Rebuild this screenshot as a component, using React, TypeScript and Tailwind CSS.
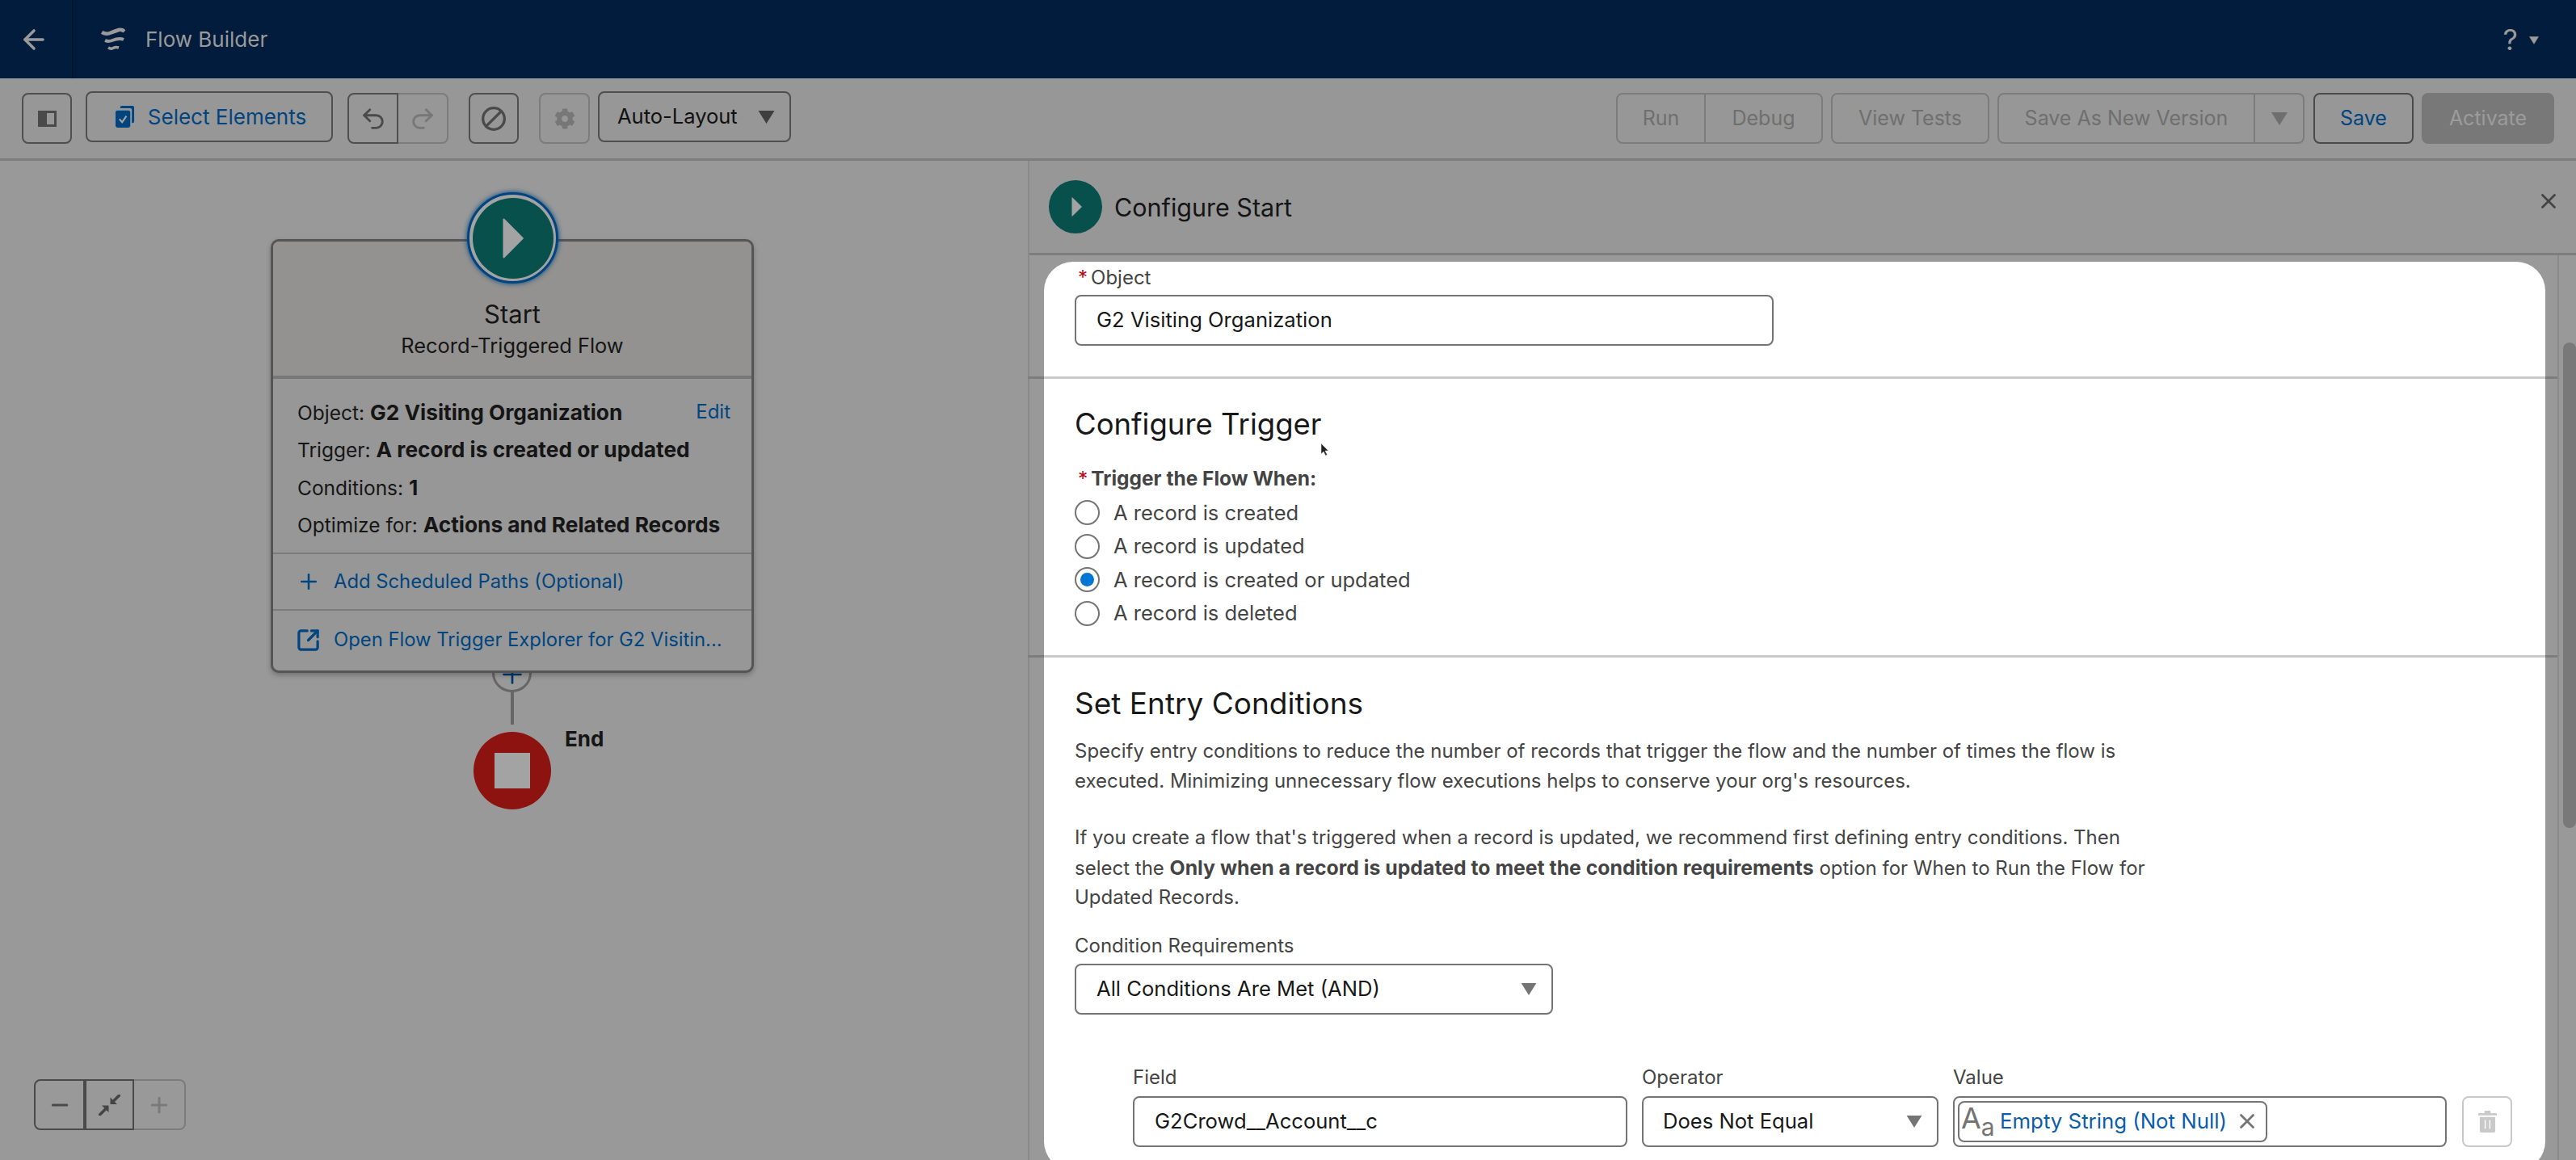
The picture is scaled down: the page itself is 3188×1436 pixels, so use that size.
import { ArrowLeft, Ban, Minus, Plus, Redo2, SquareArrowOutUpRight, Undo2, X } from 'lucide-react';
import { FaCog } from 'react-icons/fa';
import type { ReactNode } from 'react';

function Caret({ className }: { className: string }) {
  return (
    <svg viewBox="0 0 20 16" className={className}>
      <path d="M0 0h20L10 16z" fill="currentColor" />
    </svg>
  );
}

function Play({ className }: { className: string }) {
  return (
    <svg viewBox="0 0 32 60" className={className}>
      <path d="M1 2q0-2 2-1l28 28q1 1 0 2L3 59q-2 1-2-1z" fill="currentColor" />
    </svg>
  );
}

function FlowLogo() {
  return (
    <svg viewBox="0 0 30 30" className="h-[30px] w-[30px] text-[#9a9a9a]" fill="none" stroke="currentColor">
      <path d="M1 6q5 3 10 1t11-4q4-1 7 2" strokeWidth="4.500" />
      <path d="M5 16q4 2 9 0t9-2q3 0 5 1" strokeWidth="3.800" />
      <path d="M9 25q3 2 6 .5t7-.5" strokeWidth="3.500" />
    </svg>
  );
}

function SelectIcon() {
  return (
    <svg viewBox="0 0 26 30" className="h-[29px] w-[25px]">
      <path d="M7 3q0-2 2-2h14q2 0 2 2v18q0 2-2 2h-1V6q0-2-2-2H7z" fill="#00457f" />
      <rect x="1" y="7" width="19" height="22" rx="2.500" fill="#00457f" />
      <path d="M6 18l3.500 4 5.500-8" fill="none" stroke="#a5a5a5" strokeWidth="2.200" />
    </svg>
  );
}

function ToolBtn({ className, children }: { className: string; children: ReactNode }) {
  return <div className={`flex shrink-0 items-center justify-center border-2 ${className}`}>{children}</div>;
}

function Divider() {
  return (
    <div className="relative h-[3px] bg-[#c9c9c9]">
      <div className="absolute left-[-20px] top-0 h-[3px] w-[20px] bg-[#7d7d7d]" />
      <div className="absolute left-full top-0 h-[3px] w-[15px] bg-[#7d7d7d]" />
    </div>
  );
}

function Radio({ label, checked }: { label: string; checked?: boolean }) {
  return (
    <div className="flex h-[41.500px] items-center">
      <div className="flex h-[31px] w-[31px] items-center justify-center rounded-full border-2 border-[#747474] bg-white">
        {checked && <div className="h-[17px] w-[17px] rounded-full bg-[#0176d3]" />}
      </div>
      <span className="ml-[17px] text-[25.500px] text-[#444444]">{label}</span>
    </div>
  );
}

function CardRow({ label, value, right }: { label: string; value: string; right?: ReactNode }) {
  return (
    <div className="flex h-[46.500px] items-center justify-between text-[24.500px] text-[#151515]">
      <div>
        {label} <span className="text-[26.300px] font-bold">{value}</span>
      </div>
      {right}
    </div>
  );
}

export default function App() {
  return (
    <div className="flex h-[1436px] w-[3188px] flex-col overflow-hidden bg-[#999999] font-[family-name:Inter,sans-serif]">
      {/* top bar */}
      <header className="flex h-[97px] shrink-0 items-center bg-[#011c3c] text-[#9a9a9a]">
        <div className="flex h-full w-[91px] items-center justify-center border-r-2 border-[#01142c]">
          <ArrowLeft size={38} strokeWidth={2.2} className="mr-[6px]" />
        </div>
        <div className="ml-[34px]">
          <FlowLogo />
        </div>
        <span className="ml-[25px] text-[26px]">Flow Builder</span>
        <div className="ml-auto mr-[46px] flex items-center gap-[14px]">
          <span className="text-[36px] leading-none">?</span>
          <Caret className="mt-[2px] h-[10px] w-[12px]" />
        </div>
      </header>

      {/* toolbar */}
      <div className="flex h-[102px] shrink-0 items-center border-b-[3px] border-[#7d7d7d] bg-[#979797] pl-[27px] pr-[27px]">
        <ToolBtn className="h-[63px] w-[62px] rounded-[8px] border-[#4f4f4f]">
          <div className="flex h-[20px] w-[23px] border-[3px] border-[#4a4a4a]">
            <div className="w-[8px] bg-[#4a4a4a]" />
          </div>
        </ToolBtn>
        <ToolBtn className="ml-[17px] mb-[4px] h-[63px] w-[306px] gap-[16px] rounded-[8px] border-[#4f4f4f] pl-[3px]">
          <SelectIcon />
          <span className="text-[26px] text-[#00457f]">Select Elements</span>
        </ToolBtn>
        <ToolBtn className="ml-[18px] h-[63px] w-[63px] rounded-l-[8px] border-[#4f4f4f]">
          <Undo2 size={34} strokeWidth={2} className="text-[#4a4a4a]" />
        </ToolBtn>
        <ToolBtn className="h-[63px] w-[62px] rounded-r-[8px] border-l-0 border-[#7c7c7c]">
          <Redo2 size={34} strokeWidth={2} className="text-[#777777]" />
        </ToolBtn>
        <ToolBtn className="ml-[25px] h-[63px] w-[62px] rounded-[8px] border-[#4f4f4f]">
          <Ban size={32} strokeWidth={2.5} className="-scale-x-100 text-[#4a4a4a]" />
        </ToolBtn>
        <ToolBtn className="ml-[25px] h-[63px] w-[63px] rounded-[8px] border-[#7c7c7c]">
          <FaCog size={26} className="text-[#777777]" />
        </ToolBtn>
        <div className="ml-[10px] mb-[4px] flex h-[63px] w-[239px] shrink-0 items-center justify-between rounded-[8px] border-2 border-[#4f4f4f] pl-[22px] pr-[18px]">
          <span className="text-[25.500px] text-[#111111]">Auto-Layout</span>
          <Caret className="h-[16px] w-[21px] text-[#3f3f3f]" />
        </div>

        <div className="ml-auto flex items-center text-[25px] text-[#6f6f6f]">
          <ToolBtn className="h-[63px] w-[111px] rounded-l-[8px] border-[#7c7c7c]">Run</ToolBtn>
          <ToolBtn className="h-[63px] w-[145px] rounded-r-[8px] border-l-0 border-[#7c7c7c]">Debug</ToolBtn>
          <ToolBtn className="ml-[10px] h-[63px] w-[196px] rounded-[8px] border-[#7c7c7c]">View Tests</ToolBtn>
          <ToolBtn className="ml-[10px] h-[63px] w-[319px] rounded-l-[8px] border-[#7c7c7c]">Save As New Version</ToolBtn>
          <ToolBtn className="h-[63px] w-[61px] rounded-r-[8px] border-l-0 border-[#7c7c7c]">
            <Caret className="h-[16px] w-[20px] text-[#6f6f6f]" />
          </ToolBtn>
          <ToolBtn className="ml-[11px] h-[63px] w-[124px] rounded-[8px] border-[#4a4a4a] text-[#00457f]">Save</ToolBtn>
          <ToolBtn className="ml-[10px] h-[63px] w-[164px] rounded-[8px] border-[#787878] bg-[#787878] text-[#9c9c9c]">Activate</ToolBtn>
        </div>
      </div>

      <main className="flex min-h-0 flex-1">
        {/* canvas */}
        <section className="relative w-[1272px] shrink-0 bg-[#999999]">
          <div className="absolute left-[609px] top-[610px] h-[48px] w-[49px] rounded-full border-[3px] border-[#666666]">
            <Plus size={36} strokeWidth={1.8} className="absolute left-[3.500px] top-[5px] text-[#003a6b]" />
          </div>
          <div className="absolute left-[632px] top-[657px] h-[41px] w-[4px] bg-[#666666]" />

          <div className="absolute left-[335px] top-[97px] h-[537px] w-[598px] rounded-[10px] border-[3px] border-[#555555] bg-[#979797] shadow-[0_3px_6px_rgba(0,0,0,0.25)]">
            <div className="flex h-[170px] flex-col items-center rounded-t-[8px] border-b-[4px] border-[#777777] bg-[#939290] pt-[70px] text-[#151515]">
              <span className="text-[31px] leading-[40px]">Start</span>
              <span className="text-[25.400px] leading-[38px]">Record-Triggered Flow</span>
            </div>
            <div className="h-[217px] border-b-2 border-[#7b7b7b] pl-[30px] pr-[26px] pt-[18px]">
              <CardRow label="Object:" value="G2 Visiting Organization" right={<span className="text-[24px] text-[#00457f]">Edit</span>} />
              <CardRow label="Trigger: " value="A record is created or updated" />
              <CardRow label="Conditions:" value="1" />
              <CardRow label="Optimize for:" value="Actions and Related Records" />
            </div>
            <div className="flex h-[70px] items-center gap-[16px] border-b-2 border-[#7b7b7b] pl-[29px] text-[23.800px] text-[#00457f]">
              <Plus size={30} strokeWidth={2} />
              <span>Add Scheduled Paths (Optional)</span>
            </div>
            <div className="flex h-[72px] items-center gap-[16px] pl-[28px] text-[23.800px] text-[#00457f]">
              <SquareArrowOutUpRight size={31} strokeWidth={2.5} />
              <span>Open Flow Trigger Explorer for G2 Visitin...</span>
            </div>
          </div>

          {/* start node */}
          <div className="absolute left-[578px] top-[39px] flex h-[113px] w-[113px] items-center justify-center rounded-full border-[3px] border-[#00457f] bg-[#a3a3a3] shadow-[0_0_6px_#00457f]">
            <div className="flex h-[100px] w-[100px] items-center justify-center rounded-full bg-[#08504c]">
              <Play className="h-[50px] w-[32px] text-[#a3a3a3]" />
            </div>
          </div>

          {/* end node */}
          <div className="absolute left-[586px] top-[707px] flex h-[96px] w-[96px] items-center justify-center rounded-full bg-[#8d1310]">
            <div className="h-[44px] w-[44px] bg-[#a3a3a3]" />
          </div>
          <span className="absolute left-[699px] top-[700px] text-[26px] font-bold leading-[32px] text-[#151515]">End</span>

          {/* zoom controls */}
          <div className="absolute left-[42px] top-[1137px] flex">
            <ToolBtn className="h-[63px] w-[63px] rounded-l-[8px] border-[#4a4a4a]">
              <Minus size={30} strokeWidth={2.4} className="text-[#4a4a4a]" />
            </ToolBtn>
            <ToolBtn className="h-[63px] w-[61px] border-l-2 border-[#4a4a4a]">
              <svg viewBox="0 0 27 26" className="h-[26px] w-[27px]">
                <path d="M14.500 3.500v8.500h8.500zM12.500 13.500h-8.500l8.500 8.500z" fill="#444444" />
                <path d="M25.500 1l-8 8M1.500 25l8-8" stroke="#444444" strokeWidth="3.500" strokeLinecap="round" />
              </svg>
            </ToolBtn>
            <ToolBtn className="h-[63px] w-[64px] rounded-r-[8px] border-l-0 border-[#7c7c7c]">
              <Plus size={30} strokeWidth={2.4} className="text-[#7a7a7a]" />
            </ToolBtn>
          </div>
        </section>

        {/* configure panel */}
        <aside className="flex min-w-0 flex-1 flex-col border-l-2 border-[#8a8a8a] bg-[#999999]">
          <div className="relative flex h-[117px] shrink-0 items-center border-b-[3px] border-[#7d7d7d] bg-[#979797] pl-[24px]">
            <div className="flex h-[66px] w-[66px] items-center justify-center rounded-full bg-[#08504c] pl-[3px]">
              <Play className="h-[24px] w-[15px] text-[#a3a3a3]" />
            </div>
            <span className="ml-[15px] pt-[2px] text-[30.500px] text-[#151515]">Configure Start</span>
            <X size={30} strokeWidth={2.2} className="absolute right-[19px] top-[35px] text-[#444444]" />
          </div>

          <div className="flex min-h-0 flex-1 pt-[8px]">
            <div className="ml-[18px] h-[1125px] w-[1858px] shrink-0 rounded-[36px] bg-white">
              <div className="h-[142px] pl-[38px] pt-[3px]">
                <div className="flex h-[34px] items-center text-[24px] text-[#444444]">
                  <span className="ml-[4px] mr-[4px] text-[#ba0517]">*</span>Object
                </div>
                <div className="mt-[4px] flex h-[63px] w-[865px] items-center rounded-[8px] border-2 border-[#747474] pl-[25px] text-[25.600px] text-[#181818]">
                  G2 Visiting Organization
                </div>
              </div>
              <Divider />

              <div className="h-[342px] pl-[38px] pt-[32px]">
                <h2 className="text-[36.500px] leading-[48px] text-[#181818]">Configure Trigger</h2>
                <div className="mt-[25px] flex h-[36px] items-center text-[24.500px] font-bold text-[#444444]">
                  <span className="ml-[4px] mr-[4px] font-normal text-[#ba0517]">*</span>Trigger the Flow When:
                </div>
                <div className="mt-[4px]">
                  <Radio label="A record is created" />
                  <Radio label="A record is updated" />
                  <Radio label="A record is created or updated" checked />
                  <Radio label="A record is deleted" />
                </div>
              </div>
              <Divider />

              <div className="pl-[38px] pt-[33px]">
                <h2 className="text-[37px] leading-[48px] text-[#181818]">Set Entry Conditions</h2>
                <p className="mt-[17px] w-[1340px] text-[24px] leading-[36.500px] text-[#444444]">
                  Specify entry conditions to reduce the number of records that trigger the flow and the number of times the flow is
                  executed. Minimizing unnecessary flow executions helps to conserve your org's resources.
                </p>
                <p className="mt-[34px] w-[1340px] text-[24px] leading-[36.500px] text-[#444444]">
                  If you create a flow that's triggered when a record is updated, we recommend first defining entry conditions. Then
                  select the <b className="text-[24.800px]">Only when a record is updated to meet the condition requirements</b> option for When to Run the Flow for
                  Updated Records.
                </p>
                <div className="mt-[23px] text-[24px] leading-[36px] text-[#444444]">Condition Requirements</div>
                <div className="mt-[4px] flex h-[63px] w-[592px] items-center justify-between rounded-[8px] border-2 border-[#747474] pl-[25px] pr-[18px] text-[25.600px] text-[#181818]">
                  All Conditions Are Met (AND)
                  <Caret className="h-[15px] w-[20px] text-[#747474]" />
                </div>

                <div className="ml-[72px] mt-[60px] flex items-end">
                  <div className="w-[612px]">
                    <div className="mb-[5px] text-[24px] leading-[36px] text-[#444444]">Field</div>
                    <div className="flex h-[63px] items-center rounded-[8px] border-2 border-[#747474] pl-[25px] text-[25.600px] text-[#181818]">
                      G2Crowd__Account__c
                    </div>
                  </div>
                  <div className="ml-[18px] w-[367px]">
                    <div className="mb-[5px] text-[24px] leading-[36px] text-[#444444]">Operator</div>
                    <div className="flex h-[63px] items-center justify-between rounded-[8px] border-2 border-[#747474] pl-[24px] pr-[18px] text-[25.600px] text-[#181818]">
                      Does Not Equal
                      <Caret className="h-[15px] w-[20px] text-[#747474]" />
                    </div>
                  </div>
                  <div className="ml-[18px] w-[611px]">
                    <div className="mb-[5px] text-[24px] leading-[36px] text-[#444444]">Value</div>
                    <div className="flex h-[63px] items-center rounded-[8px] border-2 border-[#747474] pl-[4px]">
                      <div className="flex h-[51px] w-[383px] items-center rounded-[8px] border-2 border-[#747474]">
                        <span className="ml-[2px] flex w-[44px] text-[#747474]">
                          <span className="text-[36px] leading-[34px]">A</span>
                          <span className="mt-[14px] text-[30px] leading-[28px]">a</span>
                        </span>
                        <span className="ml-[4px] text-[25.800px] text-[#0b5cab]">Empty String (Not Null)</span>
                        <X size={30} strokeWidth={2.2} className="ml-auto mr-[8px] text-[#747474]" />
                      </div>
                    </div>
                  </div>
                  <div className="ml-[19px] flex h-[63px] w-[62px] items-center justify-center rounded-[8px] border-2 border-[#c9c9c9]">
                    <svg viewBox="0 0 24 28" className="h-[27px] w-[23px] text-[#c9c9c9]">
                      <path d="M9 0h6q1 0 1 1v2h7q1 0 1 1v2H0V4q0-1 1-1h7V1q0-1 1-1zM2 8h20v18q0 2-2 2H4q-2 0-2-2z" fill="currentColor" />
                      <path d="M9 12v11M15 12v11" stroke="#ffffff" strokeWidth="1.500" />
                    </svg>
                  </div>
                </div>
              </div>
            </div>

            {/* scrollbar */}
            <div className="ml-[15px] mt-[-8px] flex-1 border-l-2 border-[#8a8a8a] pl-[5px] pt-[108px]">
              <div className="h-[601px] w-[16px] rounded-t-[8px] rounded-b-[8px] bg-[#797979]" />
            </div>
          </div>
        </aside>
      </main>

      {/* mouse pointer */}
      <svg viewBox="0 0 12 18" className="absolute left-[1634px] top-[548px] h-[18px] w-[12px]">
        <path d="M1 1v13l3-3 2.500 5 2-1-2.500-5h4z" fill="#222222" stroke="#dddddd" strokeWidth="0.600" />
      </svg>
    </div>
  );
}
